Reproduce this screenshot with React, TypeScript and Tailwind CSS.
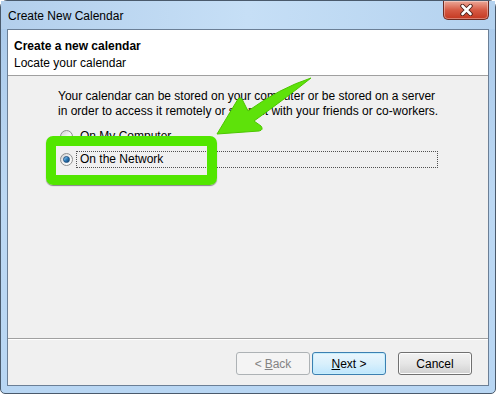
import React from 'react';

const font = { fontFamily: '"Liberation Sans", Arial, sans-serif' };

const Radio: React.FC<{ checked?: boolean }> = ({ checked }) => (
  <span className="relative flex h-[13px] w-[13px] items-center justify-center rounded-full border border-[#8e8f8f] bg-gradient-to-br from-[#cfcfcf] via-[#f2f2f2] to-[#ffffff]">
    {checked && (
      <span className="h-[7px] w-[7px] rounded-full border border-[#1b4f80] bg-gradient-to-br from-[#9fd7f8] via-[#2f7fbd] to-[#103e6b]" />
    )}
  </span>
);

const WizButton: React.FC<{ kind?: 'default' | 'disabled' | 'normal'; children: React.ReactNode }> = ({ kind = 'normal', children }) => {
  const cls =
    kind === 'default'
      ? 'border-[#3c7fb1] bg-gradient-to-b from-[#eaf6fd] via-[#d9f0fc] to-[#bee6fd] text-black shadow-[inset_0_0_0_1px_#c6eefc]'
      : kind === 'disabled'
      ? 'border-[#adb2b5] bg-[#f4f4f4] text-[#838383]'
      : 'border-[#707070] bg-gradient-to-b from-[#f2f2f2] via-[#e6e6e6] to-[#d0d0d0] text-black shadow-[inset_0_0_0_1px_#fcfcfc]';
  return (
    <div className={`flex h-[23px] w-[74px] items-center justify-center rounded-[3px] border text-[12px] ${cls}`}>
      {children}
    </div>
  );
};

const App: React.FC = () => {
  return (
    <div className="relative h-[399px] w-[496px] overflow-hidden bg-white" style={font}>
      {/* window frame */}
      <div className="flex h-[394px] w-[496px] flex-col rounded-t-[7px] rounded-b-[5px] border border-[#4a5a6c] bg-gradient-to-b from-[#a9c9ea] via-[#bcd8f3] to-[#b8d6f3]">
        {/* title bar */}
        <div className="flex h-[28px] items-start justify-between bg-gradient-to-r from-[#b3cfec] via-[#c6dff6] to-[#b4d2ef]">
          <div className="pl-[7px] pt-[8px] text-[12px] leading-[14px] text-black">Create New Calendar</div>
          <div className="mr-[6px] flex h-[19px] w-[46px] items-center justify-center rounded-b-[5px] border border-t-0 border-[#6d2b22] bg-gradient-to-b from-[#eba898] via-[#d65a44] to-[#c4371f] shadow-[inset_0_0_0_1px_rgba(255,255,255,0.35)]">
            <svg width="15" height="12" viewBox="0 0 15 12">
              <path d="M3.5 2 L11.5 10 M11.5 2 L3.5 10" stroke="#4a1c15" strokeWidth="4.4" strokeLinecap="round" />
              <path d="M3.5 2 L11.5 10 M11.5 2 L3.5 10" stroke="#ffffff" strokeWidth="2.6" strokeLinecap="round" />
            </svg>
          </div>
        </div>

        {/* client area */}
        <div className="mx-[6px] flex flex-1 flex-col border border-[#6b7f96] bg-[#f0f0f0]">
          <div className="flex h-[46px] flex-col border-b border-[#a0a0a0] bg-white pl-[6px] pt-[8px] text-[12px] leading-[17px] text-black">
            <div className="font-bold">Create a new calendar</div>
            <div>Locate your calendar</div>
          </div>

          <div className="flex flex-1 flex-col pl-[50px] pt-[13px] text-[12px] text-black">
            <p className="leading-[15px]">
              Your calendar can be stored on your computer or be stored on a server
              <br />
              in order to access it remotely or share it with your friends or co-workers.
            </p>
            <div className="mt-[9px] flex h-[17px] items-center pl-[2px]">
              <Radio />
              <span className="ml-[3px] border border-transparent pl-[3px] leading-[15px]">On My Computer</span>
            </div>
            <div className="mt-[6px] flex h-[17px] items-center pl-[2px]">
              <Radio checked />
              <span className="ml-[3px] flex h-[17px] w-[362px] items-center border border-dotted border-[#505050] pl-[3px] leading-[15px]">
                On the Network
              </span>
            </div>
          </div>

          <div className="flex h-[47px] items-start justify-end gap-[2px] border-t border-[#a0a0a0] pr-[16px] pt-[13px] shadow-[inset_0_1px_0_#ffffff]">
            <WizButton kind="disabled">
              &lt; <span className="ml-[3px] underline">B</span>ack
            </WizButton>
            <WizButton kind="default">
              <span className="underline">N</span>ext &gt;
            </WizButton>
            <div className="ml-[10px]">
              <WizButton>Cancel</WizButton>
            </div>
          </div>
        </div>
        <div className="h-[7px]" />
      </div>

      {/* green highlight box */}
      <div className="absolute left-[46px] top-[136px] h-[49px] w-[171px] rounded-[7px] border-[10px] border-[#52e600] shadow-[0_1px_1px_rgba(0,0,0,0.45)]" />

      {/* green arrow */}
      <svg className="absolute left-0 top-0" width="496" height="399" viewBox="0 0 496 399">
        <path
          d="M217,134 L238,99 Q241,96 243,101 L248,111 Q280,88 311,78 Q286,98 254,121 L261,126 Q264,130 259,131 Z"
          fill="#5ee20a"
          stroke="#4cc600"
          strokeWidth="1"
          strokeLinejoin="round"
        />
      </svg>
    </div>
  );
};

export default App;
